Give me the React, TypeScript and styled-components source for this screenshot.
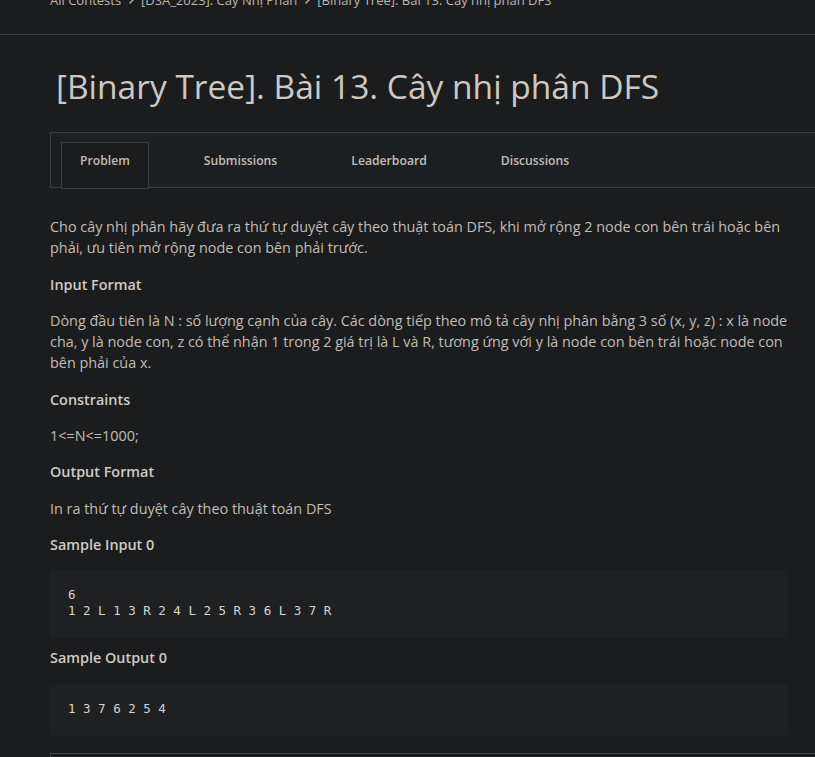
import React from "react";
import styled, { createGlobalStyle } from "styled-components";

const Global = createGlobalStyle`
  html, body { margin: 0; padding: 0; background: #1b1c1e; }
  body { font-family: "Open Sans", "Noto Sans", sans-serif; color: #c2bdb5; overflow: hidden; }
  * { box-sizing: border-box; }
`;

const Page = styled.div`
  width: 815px;
  height: 757px;
  overflow: hidden;
  background: #1b1c1e;
`;

const TopBar = styled.div`
  height: 35px;
  border-bottom: 1px solid #3a3d40;
  padding-left: 50px;
  display: flex;
  align-items: flex-start;
`;

const Crumbs = styled.nav`
  display: flex;
  align-items: center;
  gap: 6px;
  margin-top: -9px;
  font-size: 13px;
  line-height: 18px;
  color: #bdb7ae;
  white-space: nowrap;
`;

const Chevron = () => (
  <svg width="8" height="10" viewBox="0 0 8 10" fill="none">
    <path d="M2.5 1.5L6 5L2.5 8.5" stroke="#bdb7ae" strokeWidth="1.4" />
  </svg>
);

const Main = styled.main`
  padding: 28px 0 0 50px;
  width: 860px;
`;

const Title = styled.h1`
  margin: 0 0 23px 6px;
  font-size: 33.5px;
  font-weight: 400;
  line-height: 46px;
  color: #cdc8c1;
  white-space: nowrap;
`;

const TabBar = styled.div`
  height: 56px;
  border: 1px solid #3a3e41;
  background: #1c1f21;
  display: flex;
  align-items: flex-start;
  padding: 9px 0 0 10px;
  gap: 36px;
`;

const Tab = styled.div<{ $active?: boolean }>`
  height: 47px;
  padding: 9px 18px 0;
  font-size: 12.2px;
  line-height: 17px;
  font-weight: 600;
  color: #c2bdb5;
  border: 1px solid ${(p) => (p.$active ? "#3a3e41" : "transparent")};
  background: ${(p) => (p.$active ? "#1b1c1e" : "transparent")};
  white-space: nowrap;
`;

const Content = styled.section`
  width: 738px;
  padding-top: 28px;
`;

const Para = styled.p`
  margin: 0 0 15px;
  font-size: 14.4px;
  line-height: 21.3px;
  color: #c2bdb5;
`;

const Heading = styled.h3`
  margin: 0 0 15px;
  font-size: 14.4px;
  font-weight: 600;
  line-height: 21.3px;
  color: #d0cbc4;
`;

const Pre = styled.pre<{ $last?: boolean }>`
  margin: 0 0 ${(p) => (p.$last ? "18px" : "9px")};
  padding: 17px 18px ${(p) => (p.$last ? "18px" : "19px")};
  background: #1f2022;
  font-family: "DejaVu Sans Mono", monospace;
  font-size: 12.5px;
  line-height: 16px;
  color: #d8d4ce;
  white-space: pre;
`;

const BottomRule = styled.div`
  width: 800px;
  height: 20px;
  border: 1px solid #3f4346;
  border-bottom: none;
`;

export default function App() {
  return (
    <Page>
      <Global />
      <TopBar>
        <Crumbs>
          <span>All Contests</span>
          <Chevron />
          <span>[DSA_2023]. Cây Nhị Phân</span>
          <Chevron />
          <span>[Binary Tree]. Bài 13. Cây nhị phân DFS</span>
        </Crumbs>
      </TopBar>
      <Main>
        <Title>[Binary Tree]. Bài 13. Cây nhị phân DFS</Title>
        <TabBar>
          <Tab $active>Problem</Tab>
          <Tab>Submissions</Tab>
          <Tab>Leaderboard</Tab>
          <Tab>Discussions</Tab>
        </TabBar>
        <Content>
          <Para>
            Cho cây nhị phân hãy đưa ra thứ tự duyệt cây theo thuật toán DFS, khi mở rộng 2 node con bên trái hoặc bên phải, ưu tiên mở rộng node con bên phải trước.
          </Para>
          <Heading>Input Format</Heading>
          <Para>
            Dòng đầu tiên là N : số lượng cạnh của cây. Các dòng tiếp theo mô tả cây nhị phân bằng 3 số (x, y, z) : x là node cha, y là node con, z có thể nhận 1 trong 2 giá trị là L và R, tương ứng với y là node con bên trái hoặc node con bên phải của x.
          </Para>
          <Heading>Constraints</Heading>
          <Para>1&lt;=N&lt;=1000;</Para>
          <Heading>Output Format</Heading>
          <Para>In ra thứ tự duyệt cây theo thuật toán DFS</Para>
          <Heading>Sample Input 0</Heading>
          <Pre>{"6\n1 2 L 1 3 R 2 4 L 2 5 R 3 6 L 3 7 R"}</Pre>
          <Heading>Sample Output 0</Heading>
          <Pre $last>{"1 3 7 6 2 5 4"}</Pre>
        </Content>
        <BottomRule />
      </Main>
    </Page>
  );
}
